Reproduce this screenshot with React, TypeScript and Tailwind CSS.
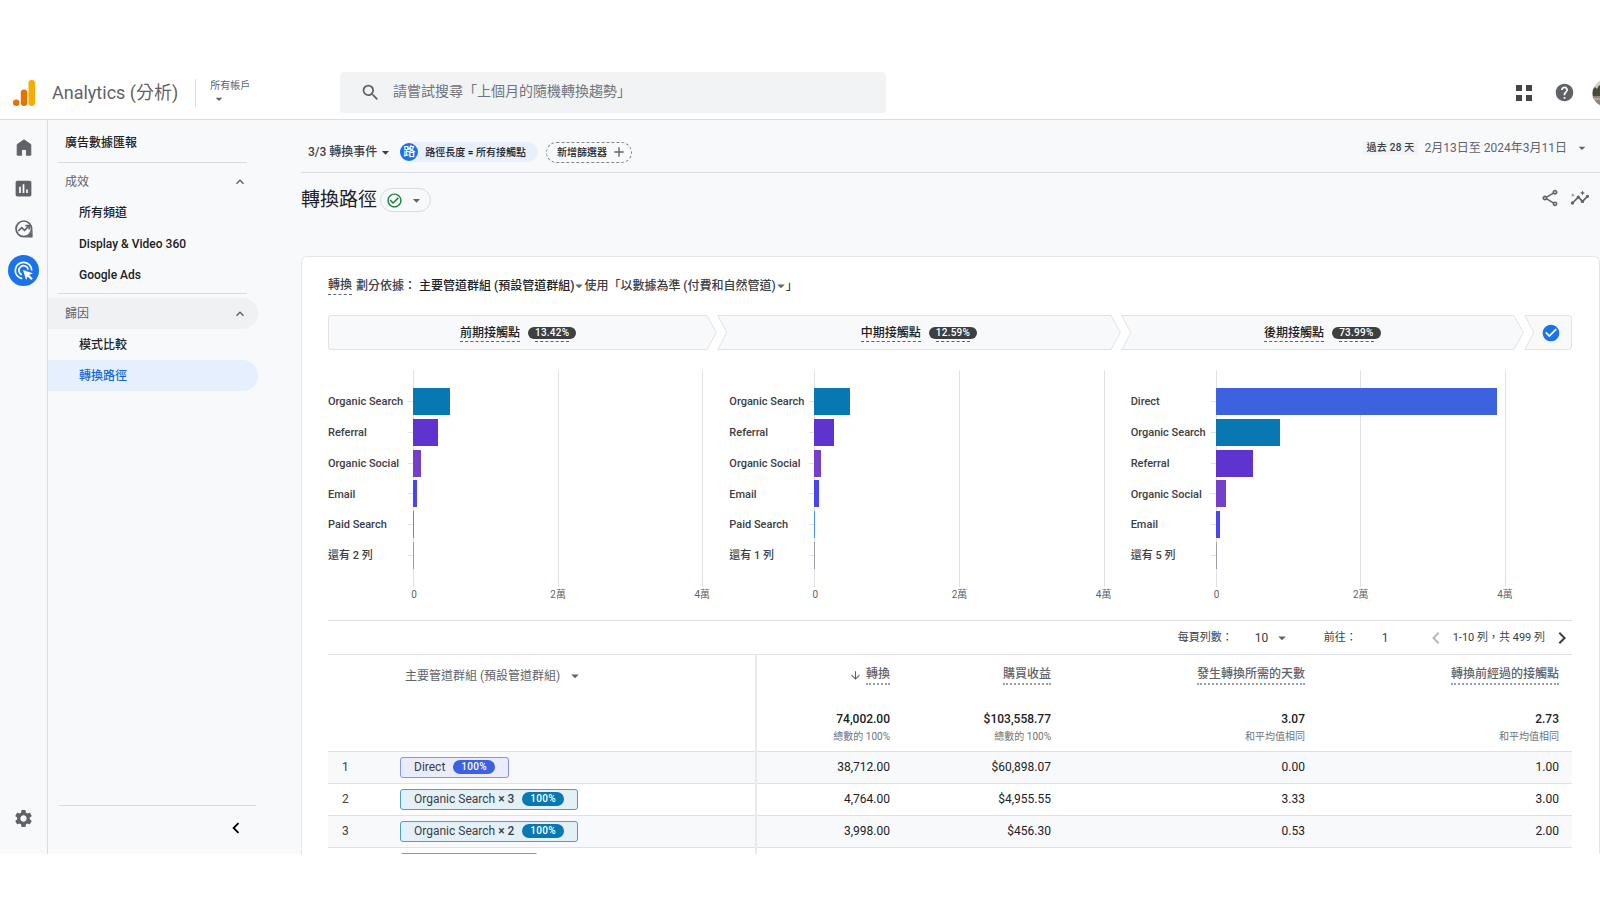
// src/App.tsx
import type { ReactNode } from "react";
import {
  MdAdd,
  MdArrowDownward,
  MdArrowDropDown,
  MdCheckCircle,
  MdCheckCircleOutline,
  MdChevronLeft,
  MdChevronRight,
  MdExpandLess,
  MdHelp,
  MdInsertChart,
  MdInsights,
  MdOutlineShare,
  MdSearch,
  MdSettings,
} from "react-icons/md";

type Bar = { label: string; value: number; color: string };

const TEAL = "#0878b3";
const VIOLET = "#5f33d0";
const PURPLE = "#7440c9";
const INDIGO = "#4846ee";
const BLUE = "#3c62e0";
const SKY = "#4b93f0";
const GRAY = "#9aa0a6";

// bar values are conversions, the axis goes up to 40,000
const AXIS_MAX = 40000;

const charts: Bar[][] = [
  [
    { label: "Organic Search", value: 5080, color: TEAL },
    { label: "Referral", value: 3410, color: VIOLET },
    { label: "Organic Social", value: 1080, color: PURPLE },
    { label: "Email", value: 510, color: INDIGO },
    { label: "Paid Search", value: 138, color: SKY },
    { label: "還有 2 列", value: 130, color: GRAY },
  ],
  [
    { label: "Organic Search", value: 4960, color: TEAL },
    { label: "Referral", value: 2700, color: VIOLET },
    { label: "Organic Social", value: 950, color: PURPLE },
    { label: "Email", value: 690, color: INDIGO },
    { label: "Paid Search", value: 138, color: SKY },
    { label: "還有 1 列", value: 130, color: GRAY },
  ],
  [
    { label: "Direct", value: 38712, color: BLUE },
    { label: "Organic Search", value: 8840, color: TEAL },
    { label: "Referral", value: 5080, color: VIOLET },
    { label: "Organic Social", value: 1380, color: PURPLE },
    { label: "Email", value: 560, color: INDIGO },
    { label: "還有 5 列", value: 130, color: GRAY },
  ],
];

const columns = [
  { title: "轉換", total: "74,002.00", note: "總數的 100%", sorted: true },
  { title: "購買收益", total: "$103,558.77", note: "總數的 100%", sorted: false },
  { title: "發生轉換所需的天數", total: "3.07", note: "和平均值相同", sorted: false },
  { title: "轉換前經過的接觸點", total: "2.73", note: "和平均值相同", sorted: false },
];

const rows = [
  {
    name: "Direct",
    times: "",
    chip: "border-[#7f97ee] bg-[#eaecfb]",
    pill: "bg-[#3c62e0]",
    cells: ["38,712.00", "$60,898.07", "0.00", "1.00"],
  },
  {
    name: "Organic Search",
    times: "× 3",
    chip: "border-[#4a9fca] bg-[#e4f0f7]",
    pill: "bg-[#0878b3]",
    cells: ["4,764.00", "$4,955.55", "3.33", "3.00"],
  },
  {
    name: "Organic Search",
    times: "× 2",
    chip: "border-[#4a9fca] bg-[#e4f0f7]",
    pill: "bg-[#0878b3]",
    cells: ["3,998.00", "$456.30", "0.53", "2.00"],
  },
];

function AnalyticsLogo() {
  return (
    <svg width="22" height="26" viewBox="0 0 22 26" aria-hidden="true">
      <rect x="15.5" y="0" width="6.5" height="26" rx="3.2" fill="#f9ab00" />
      <rect x="7.8" y="9.5" width="6.4" height="16.5" rx="3.2" fill="#e37400" />
      <circle cx="3.2" cy="22.8" r="3.2" fill="#e37400" />
    </svg>
  );
}

function HomeIcon() {
  return (
    <svg width="16" height="17" viewBox="0 0 16 17" aria-hidden="true">
      <path d="M8 .8 1.2 5.6v10.6h4.4v-5.8h4.8v5.8h4.4V5.6z" fill="#5f6368" stroke="#5f6368" strokeLinejoin="round" />
    </svg>
  );
}

function ExploreIcon() {
  return (
    <svg width="18" height="18" viewBox="0 0 18 18" fill="none" stroke="#5f6368" aria-hidden="true">
      <circle cx="8.8" cy="8.8" r="7.8" strokeWidth="1.7" />
      <path d="M17.6 9v8.6H9a8.6 8.6 0 0 0 5.5-2.4A8.6 8.6 0 0 0 17.6 9z" fill="#5f6368" stroke="none" />
      <path d="m3.2 11 3.5-3.4 2.8 2.8 4-4" strokeWidth="1.7" />
      <path d="M10.4 5.6h3.9v3.9" strokeWidth="1.7" />
    </svg>
  );
}

function AdvertisingIcon() {
  return (
    <svg width="20" height="20" viewBox="0 0 20 20" fill="none" stroke="#fff" aria-hidden="true">
      <path d="M8.2 17.6A8.2 8.2 0 1 1 17.7 9.6" strokeWidth="1.7" />
      <path d="M7.8 13.8A4.7 4.7 0 1 1 14.2 8.6" strokeWidth="1.7" />
      <path d="m9 9 9.8 3.3-3.6 1.7 3.6 3.6-1.5 1.5-3.6-3.6-1.6 3.5z" fill="#fff" stroke="none" />
    </svg>
  );
}

// round photo, cut by the window edge
function Avatar() {
  return (
    <svg width="28" height="28" viewBox="0 0 28 28" aria-hidden="true">
      <defs>
        <clipPath id="face">
          <circle cx="14" cy="14" r="13.5" />
        </clipPath>
      </defs>
      <g clipPath="url(#face)">
        <rect width="28" height="28" fill="#d9cdbf" />
        <path d="M0 11l3-3 2 2 2-4 3 4 4-3v12H0z" fill="#4d4a3d" />
        <rect y="17" width="28" height="11" fill="#8f857c" />
        <path d="M0 19h28v2H0z" fill="#b3a79c" />
      </g>
    </svg>
  );
}

function NavGroup({ title, active, children }: { title: string; active?: boolean; children: ReactNode }) {
  return (
    <section className="flex flex-col">
      <button
        type="button"
        className={
          active
            ? "flex h-[31px] items-center justify-between rounded-r-full bg-[#f0f1f3] pr-[10px] pl-[17px] text-xs text-[#5f6368]"
            : "flex h-[31px] items-center justify-between rounded-r-full pr-[10px] pl-[17px] text-xs text-[#5f6368]"
        }
      >
        {title}
        <MdExpandLess size={16} />
      </button>
      {children}
    </section>
  );
}

function NavLink({ active, children }: { active?: boolean; children: ReactNode }) {
  return (
    <a
      href="#"
      className={
        active
          ? "flex h-[31px] items-center rounded-r-full bg-[#e6effd] pl-[31px] text-xs font-medium text-[#1967d2]"
          : "flex h-[31px] items-center rounded-r-full pl-[31px] text-xs font-medium text-[#202124]"
      }
    >
      {children}
    </a>
  );
}

function Stage({ title, share, first }: { title: string; share: string; first?: boolean }) {
  return (
    <div className={first ? "flex min-w-0 flex-[388]" : "flex min-w-0 flex-[402]"}>
      {!first && (
        <svg width="10" height="35" viewBox="0 0 10 35" className="shrink-0" aria-hidden="true">
          <path d="M.5.5H10v34H.5L9.8 17.5z" fill="#f8f9fa" />
          <path d="M10 .5H.8L9.8 17.5.8 34.5H10" fill="none" stroke="#e0e2e5" />
        </svg>
      )}
      <div
        className={
          first
            ? "flex min-w-0 flex-1 items-center justify-center gap-2 rounded-l-sm border-y border-l border-[#e0e2e5] bg-[#f8f9fa]"
            : "flex min-w-0 flex-1 items-center justify-center gap-2 border-y border-[#e0e2e5] bg-[#f8f9fa]"
        }
      >
        <span className="border-b border-dashed border-[#5f6368] pt-0.5 text-xs leading-4 font-medium text-[#202124]">
          {title}
        </span>
        <span className="h-3 rounded-full bg-[#3c4043] px-[7px] text-[10px] leading-3 font-medium tracking-wide text-white">
          <span className="inline-block h-[15px] border-b border-dashed border-[#5f6368]">{share}</span>
        </span>
      </div>
      <svg width="10" height="35" viewBox="0 0 10 35" className="shrink-0" aria-hidden="true">
        <path d="M0 .5 9.4 17.5 0 34.5z" fill="#f8f9fa" />
        <path d="M0 .5 9.4 17.5 0 34.5" fill="none" stroke="#e0e2e5" />
      </svg>
    </div>
  );
}

function BarChart({ bars }: { bars: Bar[] }) {
  return (
    <div className="flex min-w-0 flex-1 flex-col">
      <div className="relative flex h-[217px] flex-col pt-4">
        {/* grid lines behind the bars */}
        <div className="absolute inset-y-0 right-[26px] left-[85px] flex justify-between">
          <span className="w-px bg-[#dfe1e4]" />
          <span className="w-px bg-[#dfe1e4]" />
          <span className="w-px bg-[#dfe1e4]" />
        </div>
        <div className="relative flex h-[185px] flex-col">
          {bars.map((bar) => (
            <div key={bar.label} className="flex flex-1 items-center pr-[26px]">
              <span className="w-20 shrink-0 pt-0.5 text-[11px] font-medium whitespace-nowrap text-[#3c4043]">
                {bar.label}
              </span>
              <span className="h-px w-[5px] bg-[#dfe1e4]" />
              <div className="flex-1">
                <div
                  className="h-[27px]"
                  style={{ width: `${(bar.value / AXIS_MAX) * 100}%`, background: bar.color }}
                />
              </div>
            </div>
          ))}
        </div>
      </div>
      <div className="flex justify-between pt-px pr-[11px] pl-[70px] text-[10px] leading-[14px] text-[#5f6368]">
        <span className="w-8 text-center">0</span>
        <span className="w-8 text-center">2萬</span>
        <span className="w-8 text-center">4萬</span>
      </div>
    </div>
  );
}

function PathTable() {
  return (
    <table className="w-full table-fixed border-collapse">
      <colgroup>
        <col className="w-[72px]" />
        <col />
        <col className="w-[147px]" />
        <col className="w-[161px]" />
        <col className="w-[254px]" />
        <col className="w-[254px]" />
      </colgroup>
      <thead>
        <tr className="h-[96px] align-top">
          <th />
          <th className="border-r-2 border-[#e8eaed] pt-3 pl-[5px] text-left font-normal">
            <button type="button" className="flex items-center gap-[6px] text-xs leading-[18px] text-[#5f6368]">
              主要管道群組 (預設管道群組)
              <MdArrowDropDown size={18} />
            </button>
          </th>
          {columns.map((col) => (
            <th key={col.title} className="pt-[10px] pr-[13px] text-right font-normal">
              <div className="flex items-center justify-end gap-1 text-[#5f6368]">
                {col.sorted && <MdArrowDownward size={13} />}
                <span className="border-b-2 border-dotted border-[#9aa0a6] text-xs leading-[18px] font-medium">
                  {col.title}
                </span>
              </div>
              <div className="mt-[25px] text-xs leading-[18px] font-medium text-[#202124]">{col.total}</div>
              <div className="text-[10px] leading-[18px] text-[#70757a]">{col.note}</div>
            </th>
          ))}
        </tr>
      </thead>
      <tbody>
        {rows.map((row, i) => (
          <tr key={row.name + row.times} className="h-8 border-t border-[#dfe1e4] odd:bg-[#f8f9fa]">
            <td className="pl-[14px] text-xs text-[#3c4043]">{i + 1}</td>
            <td className="border-r-2 border-[#e8eaed] leading-5">
              <div className={`inline-flex h-[21px] items-center gap-2 rounded-[3px] border px-[13px] align-middle ${row.chip}`}>
                <span className="text-xs text-[#3c4043]">
                  {row.name}
                  {row.times && <span className="font-medium"> {row.times}</span>}
                </span>
                <span className={`rounded-full px-2 text-[10px] leading-[14px] font-medium tracking-wide text-white ${row.pill}`}>
                  100%
                </span>
              </div>
            </td>
            {row.cells.map((cell, n) => (
              <td key={n} className="pr-[13px] text-right text-xs text-[#202124]">
                {cell}
              </td>
            ))}
          </tr>
        ))}
        <tr className="h-8 border-t border-[#dfe1e4] align-top">
          <td />
          <td className="border-r-2 border-[#e8eaed] pt-[5px]">
            <div className="h-[21px] w-[138px] rounded-[3px] border border-[#9a7fe6] bg-[#ece7fa]" />
          </td>
          <td colSpan={4} />
        </tr>
      </tbody>
    </table>
  );
}

export default function App() {
  return (
    <div className="flex h-screen flex-col overflow-hidden bg-white py-[68px] font-[Roboto,'Noto_Sans_CJK_TC',sans-serif]">
      {/* TOP BAR */}
      <header className="flex h-[52px] shrink-0 items-center overflow-hidden border-b border-[#dadce0] pb-0.5 pl-[13px] text-[#5f6368]">
        <div className="flex w-[327px] shrink-0 items-center">
          <AnalyticsLogo />
          <h1 className="ml-[17px] text-lg whitespace-nowrap">Analytics (分析)</h1>
          <button type="button" className="ml-[17px] flex h-7 flex-col items-start justify-center border-l border-[#dadce0] pl-[14px] text-[10px] leading-[14px]">
            所有帳戶
            <MdArrowDropDown size={18} className="-mt-0.5" />
          </button>
        </div>
        <label className="flex h-[41px] w-[546px] items-center gap-3 rounded bg-[#f1f3f4] pl-5">
          <MdSearch size={21} />
          <input
            type="search"
            aria-label="搜尋"
            placeholder="請嘗試搜尋「上個月的隨機轉換趨勢」"
            className="min-w-0 flex-1 bg-transparent pb-[3px] text-sm outline-none placeholder:text-[#70757a]"
          />
        </label>
        <div className="-mr-5 ml-auto flex shrink-0 items-center">
          <button type="button" aria-label="應用程式" className="mr-[22px]">
            <svg width="16" height="16" viewBox="0 0 16 16" fill="#444746">
              <path d="M0 0h6v6H0zM10 0h6v6h-6zM0 10h6v6H0zM10 10h6v6h-6z" />
            </svg>
          </button>
          <button type="button" aria-label="說明" className="mr-[17px]">
            <MdHelp size={21} />
          </button>
          <button type="button" aria-label="帳戶">
            <Avatar />
          </button>
        </div>
      </header>

      <div className="flex min-h-0 flex-1 overflow-hidden bg-[#f8f9fb]">
        {/* ICON RAIL */}
        <nav className="flex w-12 shrink-0 flex-col items-center border-r border-[#dadce0] pt-3 pb-[25px] text-[#5f6368]">
          <a href="#" aria-label="首頁" className="flex h-[41px] w-8 items-start justify-center pt-[7px]">
            <HomeIcon />
          </a>
          <a href="#" aria-label="報表" className="flex h-[41px] w-8 items-start justify-center pt-[5px]">
            <MdInsertChart size={21} />
          </a>
          <a href="#" aria-label="探索" className="flex h-[41px] w-8 items-start justify-center pt-[6px]">
            <ExploreIcon />
          </a>
          <a href="#" aria-label="廣告" className="flex size-[31px] items-center justify-center rounded-full bg-[#1a73e8]">
            <AdvertisingIcon />
          </a>
          <a href="#" aria-label="管理" className="mt-auto">
            <MdSettings size={21} />
          </a>
        </nav>

        {/* REPORT MENU */}
        <aside className="flex w-[253px] shrink-0 flex-col">
          <nav className="w-[210px]">
            <h2 className="pt-[13px] pb-[9px] pl-[17px] text-xs leading-5 font-medium text-[#202124]">廣告數據匯報</h2>
            <hr className="mr-[11px] mb-[3px] ml-[10px] border-[#dadce0]" />
            <NavGroup title="成效">
              <NavLink>所有頻道</NavLink>
              <NavLink>Display &amp; Video 360</NavLink>
              <NavLink>Google Ads</NavLink>
            </NavGroup>
            <hr className="mt-[3px] mr-[11px] mb-1 ml-[10px] border-[#dadce0]" />
            <NavGroup title="歸因" active>
              <NavLink>模式比較</NavLink>
              <NavLink active>轉換路徑</NavLink>
            </NavGroup>
          </nav>
          <div className="mt-auto mr-[45px] ml-[11px] flex h-[49px] items-start justify-end border-t border-[#dadce0] pt-[11px] pr-[9px]">
            <button type="button" aria-label="收合" className="text-black">
              <MdChevronLeft size={22} />
            </button>
          </div>
        </aside>

        {/* REPORT */}
        <main className="flex min-w-0 flex-1 flex-col">
          <div className="flex h-[53px] shrink-0 items-center border-b border-[#dadce0] pt-3 pl-[7px]">
            <button type="button" className="flex items-center text-xs font-medium text-[#3c4043]">
              3/3 轉換事件
              <MdArrowDropDown size={17} />
            </button>
            <button type="button" className="ml-1.5 flex h-5 items-center gap-[7px] rounded-full bg-[#e8f0fe] pr-3 text-[10px] font-medium text-[#202124]">
              <span className="flex size-[18px] items-center justify-center rounded-full bg-[#1a73e8] text-xs text-white">路</span>
              路徑長度 = 所有接觸點
            </button>
            <button type="button" className="ml-2 flex h-[21px] items-center gap-1 rounded-full border border-dashed border-[#80868b] pr-1 pl-[10px] text-[10px] font-medium text-[#202124]">
              新增篩選器
              <MdAdd size={16} className="text-[#5f6368]" />
            </button>
            <button type="button" className="mr-[10px] ml-auto flex items-center pb-2 text-xs text-[#5f6368]">
              <span className="mr-[7px] bg-[#f1f3f4] px-[3px] text-[10px] leading-[14px] font-medium tracking-wide text-[#3c4043]">
                過去 28 天
              </span>
              2月13日至 2024年3月11日
              <MdArrowDropDown size={16} className="ml-[7px]" />
            </button>
          </div>

          <div className="flex h-[83px] shrink-0 items-start pt-[15px] pr-[10px]">
            <h2 className="text-[19px] leading-6 text-[#202124]">轉換路徑</h2>
            <button type="button" aria-label="報表狀態" className="ml-[3px] flex h-6 w-[51px] items-center justify-between rounded-full border border-[#dadce0] pr-[5px] pl-[5px] text-[#5f6368]">
              <MdCheckCircleOutline size={17} className="text-[#188038]" />
              <MdArrowDropDown size={17} />
            </button>
            <div className="ml-auto flex items-center gap-[10px] text-[#5f6368]">
              <button type="button" aria-label="分享">
                <MdOutlineShare size={20} />
              </button>
              <button type="button" aria-label="洞察">
                <MdInsights size={20} />
              </button>
            </div>
          </div>

          <article className="min-h-0 flex-1 overflow-hidden rounded-t-md border-x border-t border-[#e4e6e9] bg-white pr-[27px] pl-[26px]">
            <div className="flex h-[58px] items-center text-xs font-medium whitespace-nowrap text-[#3c4043]">
              <span className="border-b border-dashed border-[#5f6368] leading-[17px]">轉換</span>
              <span className="mr-[3px] ml-1">劃分依據：</span>
              <button type="button" className="flex items-center font-medium text-[#202124]">
                主要管道群組 (預設管道群組)
                <MdArrowDropDown size={18} className="-mx-1 text-[#5f6368]" />
              </button>
              <button type="button" className="flex items-center">
                使用「以數據為準 (付費和自然管道)
                <MdArrowDropDown size={18} className="-mx-1 text-[#5f6368]" />」
              </button>
            </div>

            <div className="flex h-[35px]">
              <Stage title="前期接觸點" share="13.42%" first />
              <Stage title="中期接觸點" share="12.59%" />
              <Stage title="後期接觸點" share="73.99%" />
              <div className="flex w-12 shrink-0">
                <svg width="10" height="35" viewBox="0 0 10 35" aria-hidden="true">
                  <path d="M.5.5H10v34H.5L9.8 17.5z" fill="#f8f9fa" />
                  <path d="M10 .5H.8L9.8 17.5.8 34.5H10" fill="none" stroke="#e0e2e5" />
                </svg>
                <div className="flex flex-1 items-center rounded-r-sm border-y border-r border-[#e0e2e5] bg-[#f8f9fa] pl-[7px]">
                  <MdCheckCircle size={20} className="text-[#1a73e8]" />
                </div>
              </div>
            </div>

            <div className="mt-5 flex pr-10">
              {charts.map((bars, i) => (
                <BarChart key={i} bars={bars} />
              ))}
            </div>

            <div className="mt-[18px] flex h-[35px] items-center justify-end border-y border-[#dfe1e4] text-[11px] text-[#3c4043]">
              <label htmlFor="page-size" className="pt-0.5">每頁列數：</label>
              <span className="relative mr-[33px] ml-[22px] flex items-center">
                <select id="page-size" defaultValue="10" className="w-9 appearance-none bg-transparent text-xs">
                  <option>10</option>
                  <option>25</option>
                </select>
                <MdArrowDropDown size={18} className="pointer-events-none absolute right-0 text-[#5f6368]" />
              </span>
              <label htmlFor="go-to" className="pt-0.5">前往：</label>
              <input id="go-to" defaultValue="1" className="mr-[10px] ml-[25px] w-8 bg-transparent text-xs" />
              <button type="button" aria-label="上一頁" className="text-[#b5b8bc]">
                <MdChevronLeft size={24} />
              </button>
              <span className="mx-[5px] pt-0.5">1-10 列，共 499 列</span>
              <button type="button" aria-label="下一頁" className="-mr-0.5 text-[#3c4043]">
                <MdChevronRight size={24} />
              </button>
            </div>

            <PathTable />
          </article>
        </main>
      </div>
    </div>
  );
}
